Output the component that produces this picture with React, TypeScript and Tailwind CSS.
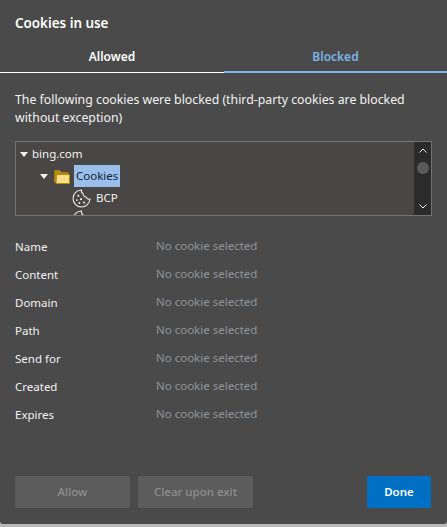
const FONT = "font-['Noto_Sans',sans-serif]";

function Caret({ className }: { className: string }) {
  return (
    <svg width="8" height="5" viewBox="0 0 8 5" className={className}>
      <path d="M0 0H8L4 5Z" fill="#f2f2f2" />
    </svg>
  );
}

function Folder() {
  return (
    <svg width="16" height="15" viewBox="0 0 16 15" className="shrink-0">
      <path d="M0.5 13.5V1.5H6L7.5 3.5H14V6" fill="#b98a13" stroke="#a87c0c" />
      <path d="M2 14.5L2.5 5.5H15.5V14.5Z" fill="#fbdf8b" stroke="#b58a14" />
    </svg>
  );
}

function Cookie({ size = 19 }: { size?: number }) {
  return (
    <svg width={size} height={size} viewBox="0 0 18 18" fill="none" className="shrink-0">
      <path
        d="M9 1 A8 8 0 1 0 17 9.5 C15 10 13.6 9 13.4 7.5 C11.6 7.5 10.4 6.2 10.6 4.6 C9.4 4.2 8.8 2.6 9 1Z"
        stroke="#efefef"
        strokeWidth="1"
      />
      <circle cx="6" cy="6.5" r="1" fill="#efefef" />
      <circle cx="4.6" cy="10.5" r="0.8" fill="#efefef" />
      <circle cx="8.6" cy="9.6" r="1" fill="#efefef" />
      <circle cx="7" cy="13.2" r="0.9" fill="#efefef" />
      <circle cx="11.5" cy="12.8" r="1" fill="#efefef" />
    </svg>
  );
}

const ROWS = ["Name", "Content", "Domain", "Path", "Send for", "Created", "Expires"];

export default function App() {
  return (
    <div className={`w-[447px] h-[527px] overflow-hidden bg-[#b9b9b9] ${FONT}`}>
      <div className="w-[447px] h-[524px] bg-[#4a4a4a] rounded-b-[3px] flex flex-col">
        <h1 className="pl-[15px] pt-[14px] h-[37px] text-[13.4px] leading-[18px] font-semibold text-white">Cookies in use</h1>
        <div className="flex h-[36px]">
          <div className="w-[224px] border-b border-white text-center text-[12px] leading-[16px] pt-[12px] font-semibold text-white">Allowed</div>
          <div className="w-[223px] border-b-2 border-[#7db3e8] text-center text-[12px] leading-[16px] pt-[12px] font-semibold text-[#7db3e8]">Blocked</div>
        </div>
        <p className="mx-[15px] mt-[18px] text-[12.3px] leading-[18px] text-[#f2f2f2]">
          The following cookies were blocked (third-party cookies are blocked without exception)
        </p>
        <div className="mx-[15px] mt-[14px] w-[417px] h-[75px] border border-[#737373] bg-[#484745] flex overflow-hidden">
          <div className="flex-1 overflow-hidden text-[11.5px] text-[#f2f2f2]">
            <div className="flex items-center h-[22px] pl-[4px] mt-[1px] gap-[4px]">
              <Caret className="" />
              <span>bing.com</span>
            </div>
            <div className="flex items-center h-[22px] pl-[24px]">
              <Caret className="mr-[6px]" />
              <Folder />
              <span className="ml-[4px] px-[2px] h-[22px] leading-[22px] bg-[#9abfeb] text-[#14233a]">Cookies</span>
            </div>
            <div className="flex items-center h-[22px] pl-[56px] gap-[5px]">
              <Cookie />
              <span>BCP</span>
            </div>
            <div className="pl-[56px] mt-[1px]">
              <Cookie />
            </div>
          </div>
          <div className="w-[17px] bg-[#2b2b2b] flex flex-col items-center justify-between py-[6px] relative">
            <svg width="8" height="5" viewBox="0 0 8 5" fill="none"><path d="M0.5 4.5L4 1L7.5 4.5" stroke="#f2f2f2" /></svg>
            <span className="absolute top-[20px] w-[12px] h-[12px] rounded-full bg-[#5a5a5a]" />
            <svg width="8" height="5" viewBox="0 0 8 5" fill="none"><path d="M0.5 0.5L4 4L7.5 0.5" stroke="#f2f2f2" /></svg>
          </div>
        </div>
        <div className="mt-[17px] mx-[15px] flex flex-col">
          {ROWS.map((r) => (
            <div key={r} className="flex h-[28px] items-center text-[11.5px]">
              <span className="w-[141px] text-[#f2f2f2]">{r}</span>
              <span className="text-[#8f9499] -mt-[2px]">No cookie selected</span>
            </div>
          ))}
        </div>
        <div className="mt-auto mb-[16px] ml-[15px] mr-[16px] flex items-center h-[32px] text-[11.5px]">
          <button className="w-[115px] h-[32px] rounded-[2px] bg-[#5c5c5c] text-[#8f8f8f] font-medium">Allow</button>
          <button className="ml-[8px] w-[115px] h-[32px] rounded-[2px] bg-[#5c5c5c] text-[#8f8f8f] font-medium">Clear upon exit</button>
          <button className="ml-auto w-[64px] h-[32px] rounded-[2px] bg-[#0070c4] text-white font-semibold">Done</button>
        </div>
      </div>
    </div>
  );
}
